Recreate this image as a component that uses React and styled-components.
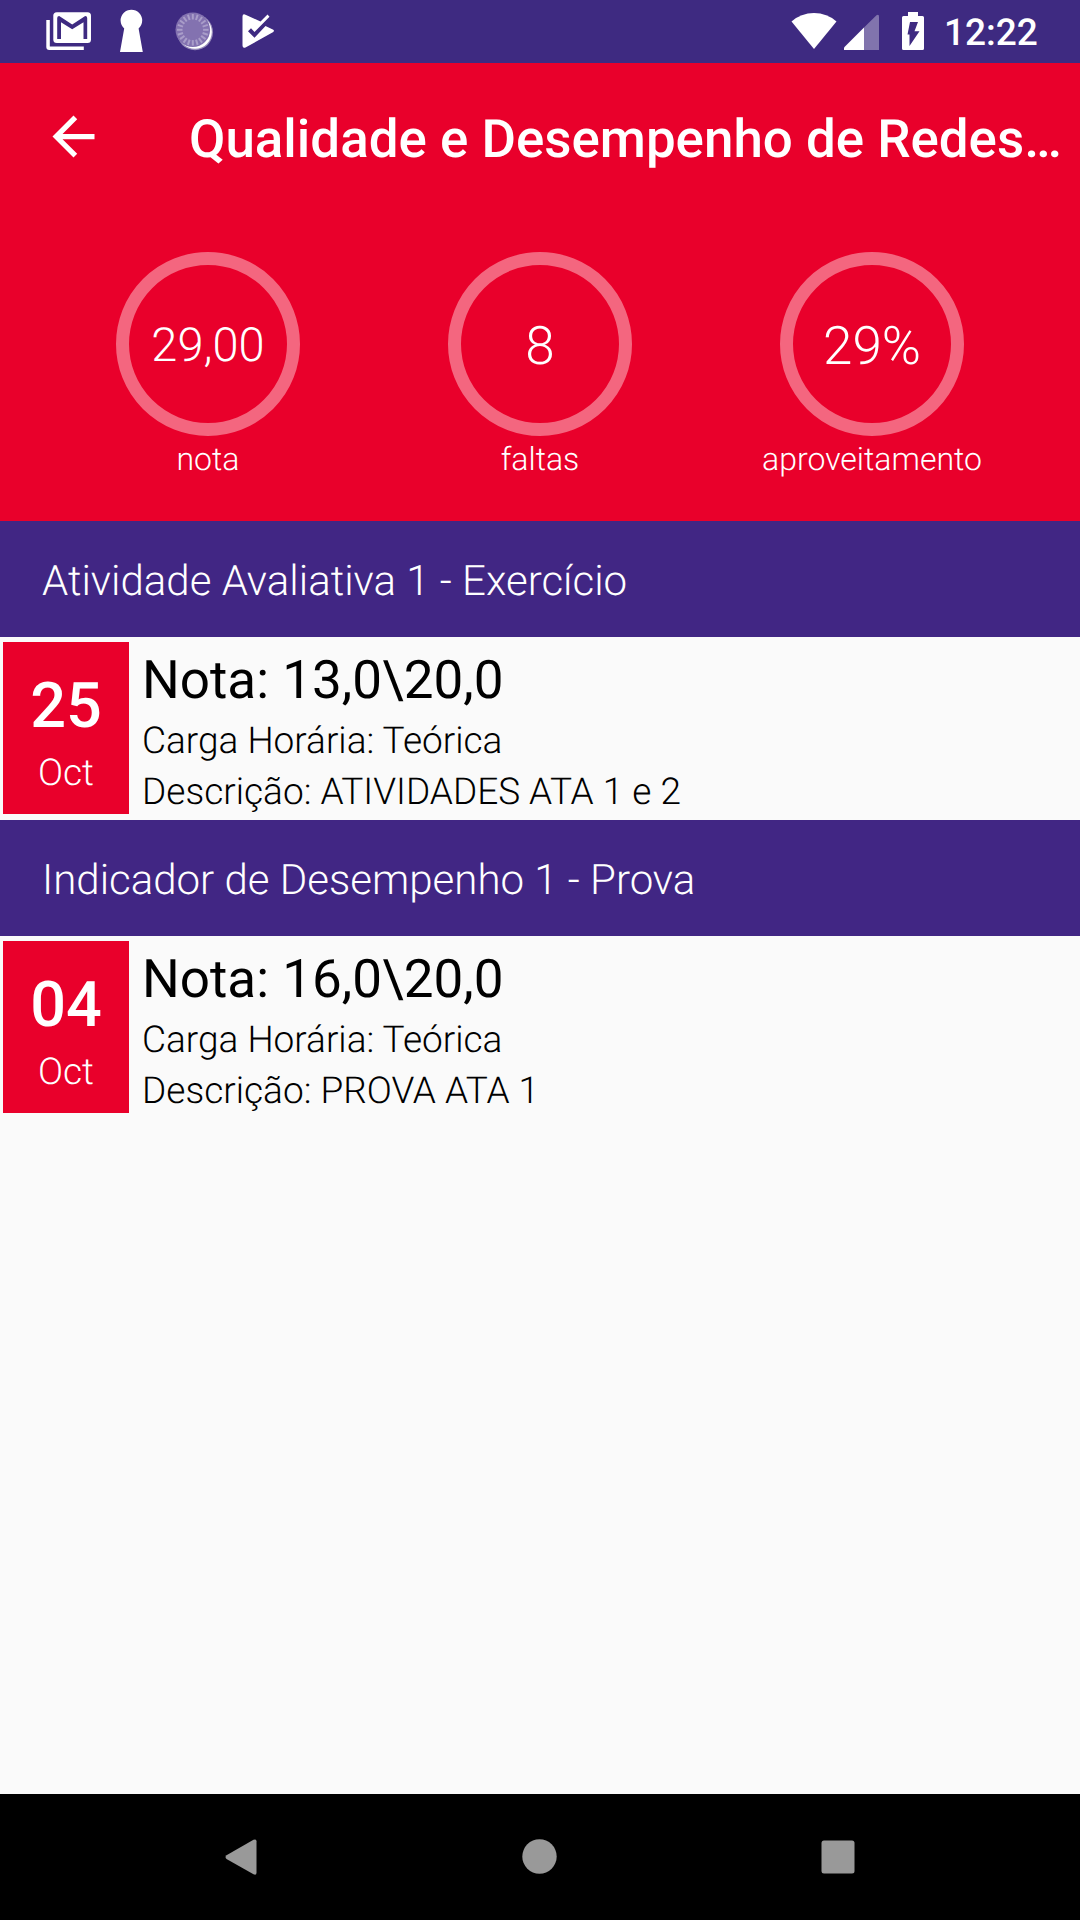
import React from 'react';
import styled, { createGlobalStyle } from 'styled-components';

const RED = '#e9002b';
const PURPLE = '#412684';

const GlobalStyle = createGlobalStyle`
  * { box-sizing: border-box; }
  html, body { margin: 0; padding: 0; }
  body {
    font-family: Roboto, "Noto Sans", sans-serif;
    text-rendering: geometricPrecision;
    overflow: hidden;
  }
`;

const Screen = styled.div`
  display: flex;
  flex-direction: column;
  width: 1080px;
  height: 1920px;
  background: #fafafa;
`;

const StatusBar = styled.div`
  display: flex;
  justify-content: space-between;
  height: 63px;
  background: #3e2a81;
`;

const StatusGroup = styled.div`
  display: flex;
  align-items: flex-start;
  padding-right: ${(p) => p.$end || 0}px;
`;

const Clock = styled.time`
  width: 109px;
  padding: 12px 0 0 9px;
  font-size: 37px;
  font-weight: 500;
  line-height: 44px;
  color: #fff;
`;

const Header = styled.header`
  display: flex;
  flex-direction: column;
  height: 458px;
  background: ${RED};
  color: #fff;
`;

const Toolbar = styled.div`
  display: flex;
  align-items: center;
  height: 147px;
  padding-left: 42px;
`;

const BackButton = styled.button`
  display: flex;
  width: 63px;
  height: 63px;
  margin-right: 84px;
  padding: 0;
  border: 0;
  background: none;
`;

const Title = styled.h1`
  margin: 0;
  padding-top: 5px;
  font-size: 52.9px;
  font-weight: 500;
  line-height: 62px;
  white-space: nowrap;
`;

const Stats = styled.div`
  display: grid;
  grid-template-columns: repeat(3, 332px);
  justify-content: center;
  padding-top: 42px;
`;

const Stat = styled.div`
  display: flex;
  flex-direction: column;
  align-items: center;
`;

const Ring = styled.div`
  display: flex;
  align-items: center;
  justify-content: center;
  width: 184px;
  height: 184px;
  padding-top: 4px;
  border: 13px solid #f4667f;
  border-radius: 50%;
  font-size: ${(p) => p.$size}px;
  font-weight: 300;
  line-height: 62px;
`;

const StatLabel = styled.div`
  padding-top: 4px;
  font-size: 32px;
  font-weight: 300;
  line-height: 38px;
`;

const SectionHeader = styled.h2`
  display: flex;
  align-items: center;
  height: 116px;
  margin: 0;
  padding: 5px 42px 0;
  background: ${PURPLE};
  color: #fff;
  font-size: 42px;
  font-weight: 300;
`;

const Entry = styled.article`
  display: flex;
  height: 183px;
  padding: 5px 3px 6px;
`;

const DateBox = styled.div`
  display: flex;
  flex-direction: column;
  align-items: center;
  width: 126px;
  height: 172px;
  padding-top: 28px;
  background: ${RED};
  color: #fff;
`;

const Day = styled.div`
  font-size: 63px;
  font-weight: 500;
  line-height: 74px;
`;

const Month = styled.div`
  padding-top: 8px;
  font-size: 37px;
  font-weight: 300;
  line-height: 44px;
`;

const Details = styled.div`
  padding-left: 13px;
  color: #000;
`;

const Grade = styled.div`
  padding-top: 7px;
  font-size: 53px;
  font-weight: 400;
  line-height: 62px;
`;

const Line = styled.div`
  padding-top: ${(p) => p.$gap}px;
  font-size: 37px;
  font-weight: 300;
  line-height: 44px;
`;

const NavBar = styled.nav`
  display: flex;
  height: 126px;
  margin-top: auto;
  padding-left: 91px;
  background: #000;
`;

const NavButton = styled.button`
  display: flex;
  width: 299px;
  padding: 0;
  border: 0;
  background: none;
`;

const ticks = Array.from({ length: 20 }, (_, i) => i * 18);

function NotificationIcons() {
  return (
    <svg width="290" height="63" viewBox="0 0 290 63" fill="#fff">
      <path d="M46.3 20h3.5v26.5h34V50H49.3a3 3 0 0 1-3-3z" />
      <rect x="53.3" y="12.3" width="37.7" height="30.7" rx="3.5" />
      <path fill="#3e2a81" d="M57.2 39V18q0-2 2-2l13 8.6 13-8.6q2 0 2 2v21h-3.7V22.2L72.2 29.3 61 22.2V39z" />
      <path d="M120 52l4.2-23.5a10.8 10.8 0 1 1 14.4 0L142.8 52z" />
      <circle cx="195" cy="32.2" r="18" opacity=".45" />
      <circle cx="195" cy="32" r="16.8" />
      <circle cx="192.8" cy="29.8" r="17.3" fill="#8372b0" />
      <g stroke="#a99dc9" strokeWidth="2">
        {ticks.map((a) => (
          <path key={a} d="M192.8 14v5.5" transform={`rotate(${a} 192.8 29.8)`} />
        ))}
      </g>
      <path d="M242.500 16.500q0-3 3-1.800L260.500 21.500l7-7 2 2.200L254.500 32l-3.500-3.700-3 3 6.500 6.500L265.500 26l7.800 3.800q1.300 1 0 2.200L245.500 47.500q-3 1-3-2z" />
    </svg>
  );
}

function SystemIcons() {
  return (
    <svg width="155" height="63" viewBox="780 0 155 63" fill="#fff">
      <path d="M814 49L791.500 21.500Q801 13 814 13t22.500 8.500z" />
      <path d="M844 50v-2.500L864 27.500V50z" />
      <path d="M864 50V27.500L876.500 15.300q2.500-1.300 2.500 1.200V50z" opacity=".35" />
      <path d="M908 16v-4h10v4h4.500q1.500 0 1.500 1.500v31q0 1.500-1.500 1.500h-19q-1.500 0-1.500-1.500v-31q0-1.500 1.500-1.500z" />
      <path fill="#3e2a81" d="M910 22h8l-3.500 9.300h5L909.500 46v-11.500h-2z" />
    </svg>
  );
}

const stats = [
  { value: '29,00', label: 'nota', size: 47 },
  { value: '8', label: 'faltas', size: 53 },
  { value: '29%', label: 'aproveitamento', size: 53 },
];

const sections = [
  { title: 'Atividade Avaliativa 1 - Exercício', day: '25', month: 'Oct', grade: '13,0\\20,0', load: 'Teórica', description: 'ATIVIDADES ATA 1 e 2' },
  { title: 'Indicador de Desempenho 1 - Prova', day: '04', month: 'Oct', grade: '16,0\\20,0', load: 'Teórica', description: 'PROVA ATA 1' },
];

export default function App() {
  return (
    <Screen>
      <GlobalStyle />
      <StatusBar>
        <StatusGroup><NotificationIcons /></StatusGroup>
        <StatusGroup $end={36}>
          <SystemIcons />
          <Clock>12:22</Clock>
        </StatusGroup>
      </StatusBar>
      <Header>
        <Toolbar>
          <BackButton aria-label="Voltar">
            <svg width="63" height="63" viewBox="0 0 24 24" fill="#fff">
              <path d="M20 11H7.830l5.590-5.590L12 4l-8 8 8 8 1.410-1.410L7.830 13H20v-2z" />
            </svg>
          </BackButton>
          <Title>Qualidade e Desempenho de Redes…</Title>
        </Toolbar>
        <Stats>
          {stats.map((s) => (
            <Stat key={s.label}>
              <Ring $size={s.size}>{s.value}</Ring>
              <StatLabel>{s.label}</StatLabel>
            </Stat>
          ))}
        </Stats>
      </Header>
      {sections.map((s) => (
        <section key={s.title}>
          <SectionHeader>{s.title}</SectionHeader>
          <Entry>
            <DateBox>
              <Day>{s.day}</Day>
              <Month>{s.month}</Month>
            </DateBox>
            <Details>
              <Grade>Nota: {s.grade}</Grade>
              <Line $gap={9}>Carga Horária: {s.load}</Line>
              <Line $gap={7}>Descrição: {s.description}</Line>
            </Details>
          </Entry>
        </section>
      ))}
      <NavBar>
        <NavButton aria-label="Back">
          <svg width="299" height="126" viewBox="91 1794 299 126" fill="#999">
            <path d="M226.500 1855.200L253.500 1839.800q3-1.200 3 1.500v31.500q0 2.700-3 1.500L226.500 1859q-2-1.900 0-3.800z" />
          </svg>
        </NavButton>
        <NavButton aria-label="Home">
          <svg width="299" height="126" viewBox="390 1794 299 126" fill="#999">
            <circle cx="539.500" cy="1856.500" r="17.200" />
          </svg>
        </NavButton>
        <NavButton aria-label="Recents">
          <svg width="299" height="126" viewBox="689 1794 299 126" fill="#999">
            <rect x="821.500" y="1840.500" width="33" height="33" rx="2.500" />
          </svg>
        </NavButton>
      </NavBar>
    </Screen>
  );
}
